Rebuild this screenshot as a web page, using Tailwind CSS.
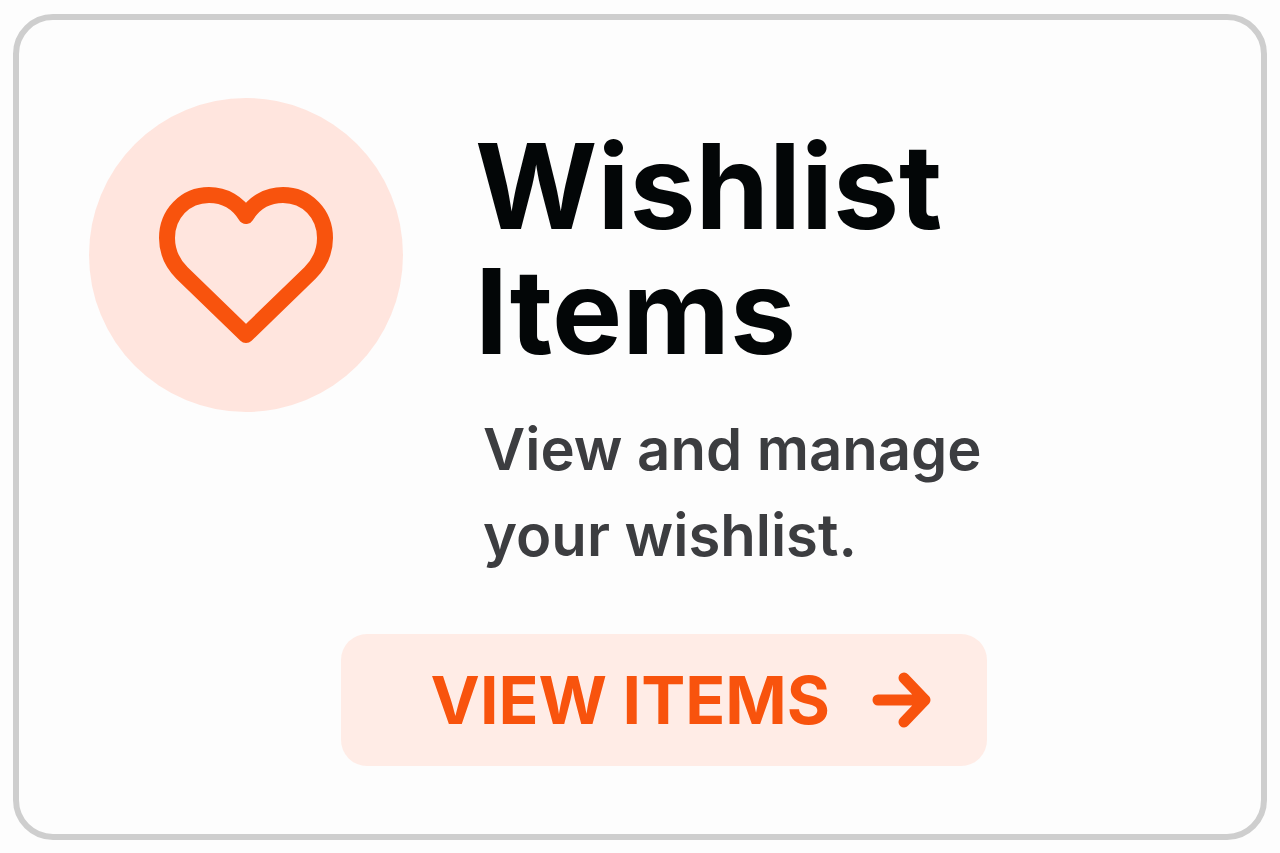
<!DOCTYPE html>
<html lang="en">
<head>
    <meta charset="UTF-8">
    <meta name="viewport" content="width=device-width, initial-scale=1.0">
    <title>Wishlist Items</title>
    <script src="https://cdn.jsdelivr.net/npm/@tailwindcss/browser@4"></script>
</head>
<body class="bg-[#fdfdfd] font-['Inter',sans-serif]">
    <!-- Wishlist Card -->
    <main class="min-h-screen flex px-[13px] pt-[14px] pb-[13px]">
        <section class="flex-1 border-[6px] border-[#cecece] rounded-[40px] px-[70px] pt-[78px] pb-[68px]">
            <div class="flex items-start gap-[72px]">
                <!-- Icon -->
                <div class="shrink-0 flex items-center justify-center size-[314px] rounded-full bg-[#ffe5de]">
                    <svg class="size-[180px]" viewBox="0 0 180 180" fill="none" stroke="#f8530d" stroke-width="16" stroke-linecap="round" stroke-linejoin="round">
                        <path d="M90 51C82 38 69 30 53 30C29 30 11 49 11 73C11 87 17 99 26 108L90 170L154 108C163 99 169 87 169 73C169 49 151 30 127 30C111 30 98 38 90 51Z" />
                    </svg>
                </div>

                <!-- Text -->
                <div class="pt-[26px]">
                    <h1 class="text-[118px] leading-[125px] font-bold text-[#030607]">Wishlist<br>Items</h1>
                    <p class="mt-8 pl-2 text-[58px] leading-[86px] font-semibold text-[#3c3d40]">View and manage<br>your wishlist.</p>
                </div>
            </div>

            <!-- Action -->
            <div class="flex justify-center mt-14 pl-12">
                <button type="button" class="flex items-center justify-end gap-[42px] w-[646px] h-[132px] pr-[55px] rounded-[26px] bg-[#ffece6] text-[#f8530d] text-[66px] font-bold cursor-pointer">
                    VIEW ITEMS
                    <svg class="w-[60px] h-[56px]" viewBox="0 0 60 56" fill="none" stroke="currentColor" stroke-width="11" stroke-linecap="round" stroke-linejoin="round">
                        <path d="M6 28H53M32 6L53 28L32 50" />
                    </svg>
                </button>
            </div>
        </section>
    </main>
</body>
</html>
